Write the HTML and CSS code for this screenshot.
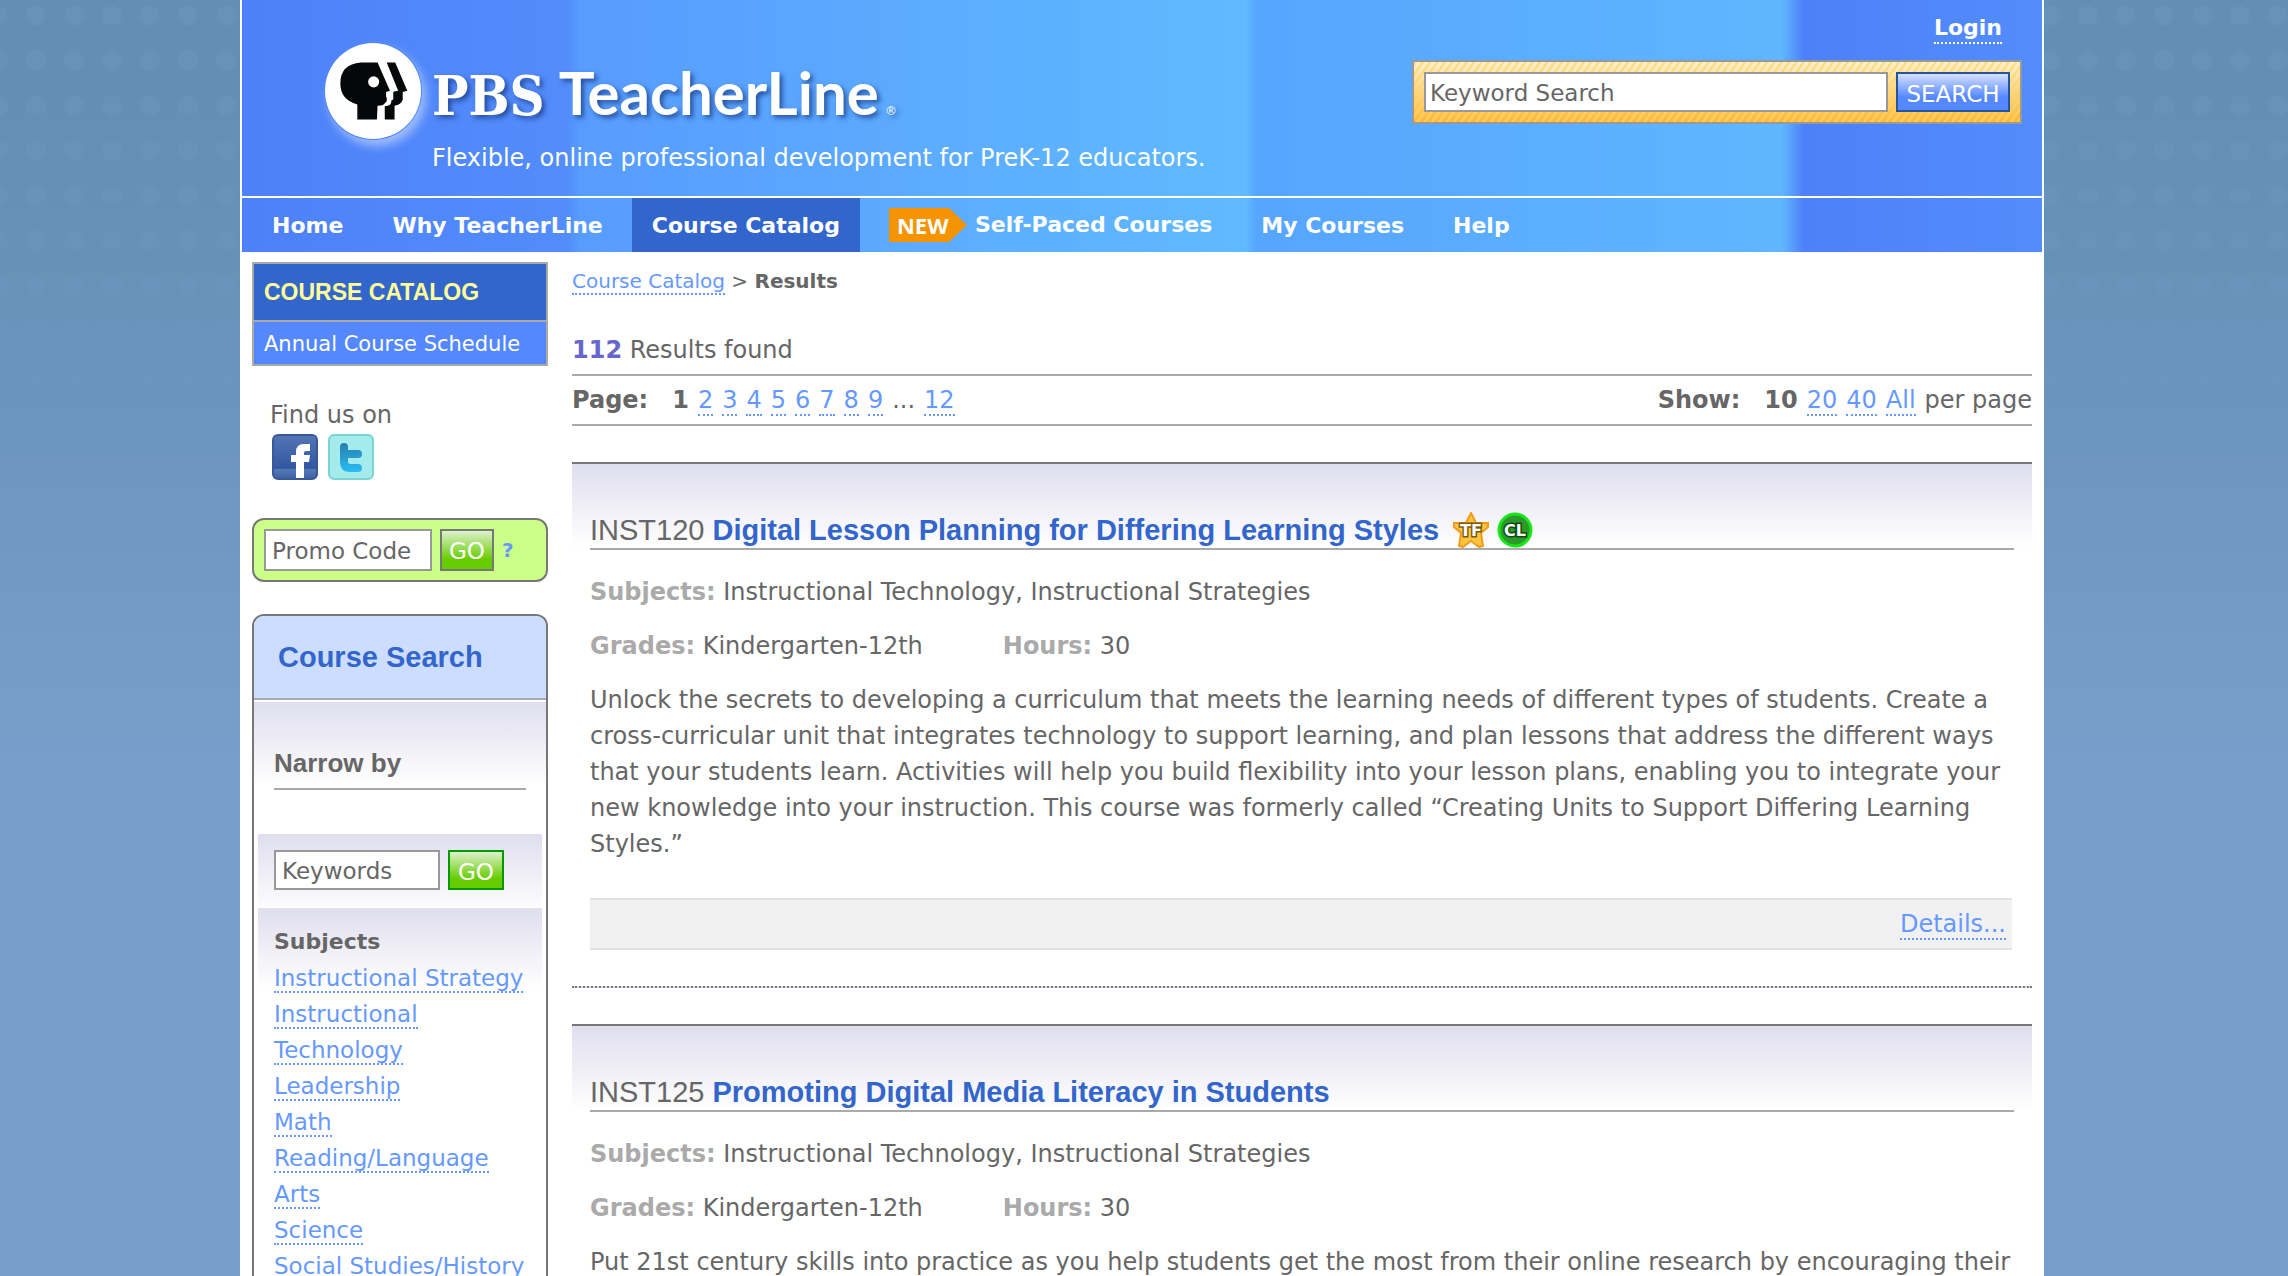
FILE: index.html
```html
<!DOCTYPE html>
<html lang="en">
<head>
<meta charset="utf-8">
<title>PBS TeacherLine: Course Catalog Results</title>
<link rel="stylesheet" href="styles.css">
</head>
<body>
<div class="page">
  <div class="masthead">
    <header class="header">
      <div class="brand">
        <h1 class="logo">
          <svg class="logo-mark" viewBox="0 0 300 300" aria-hidden="true">
            <circle cx="150" cy="150" r="147" fill="#fff"/>
            <path d="M113 63H164L202 149L190 153V165Q196 182 187 186Q184 195 164 195L162 237H102V191Q50 177 50 127Q50 68 113 63Z" fill="#050808"/>
            <path d="M192 63H218L255 149L241 153V177Q236 193 216 195V237H186V197Q208 196 206 180L212 175V152L227 149Z" fill="#050808"/>
            <circle cx="152" cy="122" r="17" fill="#fff"/>
          </svg>
          <span class="logo-text"><span class="logo-pbs">PBS</span><span class="logo-name">TeacherLine</span><span class="logo-mark-r">®</span></span>
        </h1>
        <p class="tagline">Flexible, online professional development for PreK-12 educators.</p>
      </div>
      <div class="tools">
        <a class="login" href="#">Login</a>
        <form class="site-search">
          <input class="field site-field" type="text" value="Keyword Search" aria-label="Keyword Search">
          <button class="button button-blue" type="button">SEARCH</button>
        </form>
      </div>
    </header>
    <nav class="nav">
      <a href="#">Home</a>
      <a href="#">Why TeacherLine</a>
      <a class="active" href="#">Course Catalog</a>
      <a class="with-badge" href="#"><span class="new">NEW</span>Self-Paced Courses</a>
      <a href="#">My Courses</a>
      <a href="#">Help</a>
    </nav>
  </div>

  <div class="columns">
    <aside class="sidebar">
      <div class="side-menu">
        <h2>COURSE CATALOG</h2>
        <a href="#">Annual Course Schedule</a>
      </div>

      <div class="social">
        <p>Find us on</p>
        <div class="social-icons">
          <a href="#" aria-label="Facebook">
            <svg viewBox="0 0 46 46">
              <defs><linearGradient id="fb" x1="0" y1="0" x2="0" y2="1"><stop offset="0" stop-color="#5475b5"/><stop offset=".76" stop-color="#3258a0"/><stop offset=".78" stop-color="#5478b8"/><stop offset="1" stop-color="#40619f"/></linearGradient></defs>
              <rect x="1" y="1" width="44" height="44" rx="5" fill="url(#fb)" stroke="#39589a" stroke-width="2"/>
              <path d="M24 44V28H19V21H24V18Q24 10 32 10H38V17H34Q32 17 32 19V21H38L37 28H32V44Z" fill="#fff"/>
            </svg>
          </a>
          <a href="#" aria-label="Twitter">
            <svg viewBox="0 0 46 46">
              <defs><linearGradient id="tw" x1="0" y1="10" x2="0" y2="38" gradientUnits="userSpaceOnUse"><stop offset="0" stop-color="#2b7fae"/><stop offset="1" stop-color="#28bdf5"/></linearGradient></defs>
              <rect x="1" y="1" width="44" height="44" rx="5" fill="#a3ebec" stroke="#7cd3d6" stroke-width="2"/>
              <path d="M16 13V28Q16 34 22 34H30M16 20H30" fill="none" stroke="url(#tw)" stroke-width="8" stroke-linecap="round" stroke-linejoin="round"/>
            </svg>
          </a>
        </div>
      </div>

      <form class="promo">
        <input class="field promo-field" type="text" value="Promo Code" aria-label="Promo Code">
        <button class="button button-green" type="button">GO</button>
        <a class="help" href="#">?</a>
      </form>

      <section class="course-search">
        <h2>Course Search</h2>
        <div class="narrow"><h3>Narrow by</h3></div>
        <form class="keywords">
          <input class="field keywords-field" type="text" value="Keywords" aria-label="Keywords">
          <button class="button button-green bright" type="button">GO</button>
        </form>
        <div class="subjects">
          <h4>Subjects</h4>
          <ul>
            <li><a href="#">Instructional Strategy</a></li>
            <li><a href="#">Instructional<br>Technology</a></li>
            <li><a href="#">Leadership</a></li>
            <li><a href="#">Math</a></li>
            <li><a href="#">Reading/Language<br>Arts</a></li>
            <li><a href="#">Science</a></li>
            <li><a href="#">Social Studies/History</a></li>
          </ul>
        </div>
      </section>
    </aside>

    <main class="main">
      <p class="crumbs"><a href="#">Course Catalog</a> &gt; <strong>Results</strong></p>
      <p class="count"><strong>112</strong> Results found</p>
      <div class="pager">
        <div class="pager-group"><strong class="pager-label">Page:</strong><strong>1</strong> <a href="#">2</a> <a href="#">3</a> <a href="#">4</a> <a href="#">5</a> <a href="#">6</a> <a href="#">7</a> <a href="#">8</a> <a href="#">9</a> <span>...</span> <a href="#">12</a></div>
        <div class="pager-group"><strong class="pager-label">Show:</strong><strong>10</strong> <a href="#">20</a> <a href="#">40</a> <a href="#">All</a> <span>per page</span></div>
      </div>

      <article class="course">
        <h2><span class="code">INST120</span> <a href="#">Digital Lesson Planning for Differing Learning Styles</a>
          <span class="badges">
          <svg class="badge" viewBox="0 0 36 36" role="img" aria-label="TF">
            <path d="M18 1L23 11H35V15L28 21L30 34L26 35L18 29L10 35L6 34L8 21L1 15V11H13Z" fill="#fdc53d" stroke="#f59a1c" stroke-width="2"/>
            <text x="18" y="24" text-anchor="middle" class="badge-text badge-brown">TF</text>
          </svg>
          <svg class="badge" viewBox="0 0 36 36" role="img" aria-label="CL">
            <circle cx="18" cy="18" r="16" fill="#2b9a2b" stroke="#19e619" stroke-width="3"/>
            <text x="18" y="24" text-anchor="middle" class="badge-text badge-green">CL</text>
          </svg>
          </span>
        </h2>
        <p><b>Subjects:</b> Instructional Technology, Instructional Strategies</p>
        <div class="facts"><p><b>Grades:</b> Kindergarten-12th</p><p><b>Hours:</b> 30</p></div>
        <p>Unlock the secrets to developing a curriculum that meets the learning needs of different types of students. Create a cross-curricular unit that integrates technology to support learning, and plan lessons that address the different ways that your students learn. Activities will help you build flexibility into your lesson plans, enabling you to integrate your new knowledge into your instruction. This course was formerly called “Creating Units to Support Differing Learning Styles.”</p>
        <div class="details"><a href="#">Details...</a></div>
      </article>

      <article class="course">
        <h2><span class="code">INST125</span> <a href="#">Promoting Digital Media Literacy in Students</a></h2>
        <p><b>Subjects:</b> Instructional Technology, Instructional Strategies</p>
        <div class="facts"><p><b>Grades:</b> Kindergarten-12th</p><p><b>Hours:</b> 30</p></div>
        <p>Put 21st century skills into practice as you help students get the most from their online research by encouraging their</p>
      </article>
    </main>
  </div>
</div>
</body>
</html>
```
FILE: styles.css
```css
* { box-sizing: border-box; margin: 0; padding: 0; }

body {
  height: 100vh;
  overflow: hidden;
  padding-right: 4px;
  font: 24px/36px "DejaVu Sans", Verdana, sans-serif;
  color: #666;
  background:
    linear-gradient(rgba(101, 145, 182, 0) 80px, #6c95bd 420px, #7a9ecb 780px),
    radial-gradient(circle, #6793b8 9px, transparent 11px) 17px -7px / 38px 45px,
    #628fb3;
}

a { color: #69f; text-decoration: none; border-bottom: 2px dotted #69f; }
ul { list-style: none; }

.page {
  max-width: 1804px;
  min-height: 100vh;
  margin: 0 auto;
  border: 0 solid #fff;
  border-width: 0 2px;
  background: #fff;
}

/* Header */
.masthead {
  background: linear-gradient(90deg, #4e80f9, #528dfb 325px, #579cff 338px, #60baff 1000px, #60baff 1004px, #56a5ff 1014px, #61b6ff 1540px, #4e80f9 1562px, #528dfb);
}
.header {
  display: flex;
  justify-content: space-between;
  border-bottom: 2px solid #fff;
}
.brand { padding: 42px 0 22px 82px; }
.logo { display: flex; gap: 10px; height: 100px; }
.logo-mark {
  width: 98px;
  height: 98px;
  flex: none;
  border-radius: 50%;
  box-shadow: 4px 6px 10px rgba(210, 225, 255, .6);
}
.logo-text {
  display: flex;
  align-items: baseline;
  color: #fff;
  font-weight: bold;
  line-height: 100px;
  text-shadow: 3px 3px 5px rgba(20, 50, 120, .7);
}
.logo-pbs { margin-right: 14px; font-family: "DejaVu Serif Condensed", "DejaVu Serif", serif; font-size: 54px; }
.logo-name { font-family: Lato, "Open Sans", sans-serif; font-size: 60px; }
.logo-mark-r { margin-left: 6px; font-size: 12px; font-weight: normal; }
.tagline { margin-left: 108px; color: #fff; line-height: 32px; }

.tools { display: flex; flex-direction: column; align-items: flex-end; padding: 14px 20px 0 0; }
.login { margin-right: 20px; font-size: 22px; line-height: 28px; font-weight: bold; color: #fff; border-color: #fff; }
.site-search {
  display: flex;
  gap: 8px;
  margin-top: 16px;
  padding: 10px;
  border: 2px solid #999;
  background:
    repeating-linear-gradient(125deg, rgba(255, 215, 100, .7) 0 2px, transparent 3px 6px),
    linear-gradient(#fff0d0, #ffb838);
}
.field {
  height: 40px;
  padding: 2px 6px 0;
  border: 2px solid #999;
  border-radius: 0;
  background: #fff;
  color: #666;
  font: inherit;
  font-size: 23px;
}
.site-field { width: 464px; padding: 2px 4px 0; }
.button { height: 40px; padding-top: 2px; border: 2px solid #999; font: inherit; font-size: 23px; color: #fff; }
.button-blue { width: 114px; border-color: #259; background: linear-gradient(#d5e0ff, #58f 65%); }
.button-green { width: 54px; border-color: #777; background: linear-gradient(#def2cc, #6c0 75%); }
.button-green.bright { width: 56px; border-color: #090; }

.nav { display: flex; gap: 9px; padding-left: 10px; }
.nav a {
  padding: 2px 20px 0;
  border: 0;
  color: #fff;
  font-size: 22px;
  font-weight: bold;
  line-height: 52px;
}
.nav .active { background: #36c; }
.nav .with-badge { display: flex; align-items: center; gap: 8px; padding-top: 0; }
.new {
  width: 78px;
  height: 34px;
  padding-left: 8px;
  line-height: 34px;
  font-family: "Open Sans", sans-serif;
  background: #f59300;
  clip-path: polygon(0 0, 60px 0, 100% 50%, 60px 100%, 0 100%);
}

/* Columns */
.columns { display: flex; gap: 24px; padding: 10px 10px 0; }
.sidebar { width: 296px; flex: none; }
.main { flex: 1; min-width: 0; }

h2, h3 { font-family: "Liberation Sans", Arial, sans-serif; }

.side-menu { border: 2px solid #aaa; color: #fff; }
.side-menu h2 { padding-left: 10px; font-size: 23px; line-height: 56px; color: #ff9; background: #36c; }
.side-menu a { display: block; padding: 2px 0 0 10px; font-size: 21px; line-height: 40px; color: #fff; background: #58f; border: 0; border-top: 2px solid #aaa; }

.social { padding: 31px 0 38px 18px; }
.social-icons { display: flex; gap: 10px; height: 47px; padding: 1px 0 0 2px; }
.social-icons a { border: 0; }
.social-icons svg { display: block; width: 46px; height: 46px; }

.promo {
  display: flex;
  align-items: center;
  gap: 8px;
  height: 64px;
  padding: 0 10px;
  border: 2px solid #777;
  border-radius: 12px;
  background: #cf8;
}
.promo .field, .promo .button { height: 42px; }
.promo-field { width: 168px; }
.help { font-size: 20px; font-weight: bold; border: 0; }

.course-search { margin-top: 32px; border: 2px solid #777; border-bottom: 0; border-radius: 12px 12px 0 0; }
.course-search h2 {
  padding-left: 24px;
  font-size: 29px;
  line-height: 82px;
  color: #36c;
  background: #cdf;
  border-bottom: 2px solid #aaa;
  border-radius: 10px 10px 0 0;
}
.narrow { margin-top: 2px; padding: 43px 20px 44px; background: linear-gradient(#dfdeee, #fff 84px); }
.narrow h3 { font-size: 26px; padding-bottom: 7px; border-bottom: 2px solid #aaa; }
.keywords, .subjects { margin: 0 4px; padding: 16px; background: linear-gradient(#dfdeee, #fff 80px); }
.keywords { display: flex; gap: 8px; margin-bottom: 2px; }
.keywords-field { width: 166px; }
.subjects { font-size: 23px; white-space: nowrap; }
.subjects h4 { font-size: 22px; }

/* Results */
.crumbs { padding-top: 1px; font-size: 20px; }
.count { margin-top: 33px; padding-bottom: 6px; border-bottom: 2px solid #aaa; }
.count strong { color: #66c; }
.pager { display: flex; justify-content: space-between; border-bottom: 2px solid #aaa; }
.pager-group { display: flex; gap: 9px; padding: 6px 0; }
.pager-group a { height: 34px; }
.pager-label { margin-right: 15px; }

.course {
  margin-top: 36px;
  padding: 48px 18px 36px;
  border-top: 2px solid #777;
  border-bottom: 2px dotted #777;
  background: linear-gradient(#dfdeee, #fff 84px);
}
.course h2 { display: flex; gap: 8px; height: 38px; margin-bottom: 24px; font-size: 29px; border-bottom: 2px solid #aaa; }
.course h2 a { color: #36c; border: 0; }
.code { font-weight: normal; }
.badges { display: flex; gap: 8px; margin-left: 6px; }
.badge { width: 36px; height: 36px; }
.badge-text { font: bold 16px "DejaVu Sans", sans-serif; fill: #fff; stroke-width: 3px; paint-order: stroke; }
.badge-brown { stroke: #7a5a10; }
.badge-green { stroke: #0b4a12; }
.course p { margin-bottom: 18px; }
.course b { color: #aaa; }
.facts { display: flex; gap: 80px; }
.details {
  margin: 36px 2px 0 0;
  padding-right: 6px;
  line-height: 48px;
  text-align: right;
  background: #f1f1f1;
  border: 0 solid #e2e2e2;
  border-width: 2px 0;
}
```
